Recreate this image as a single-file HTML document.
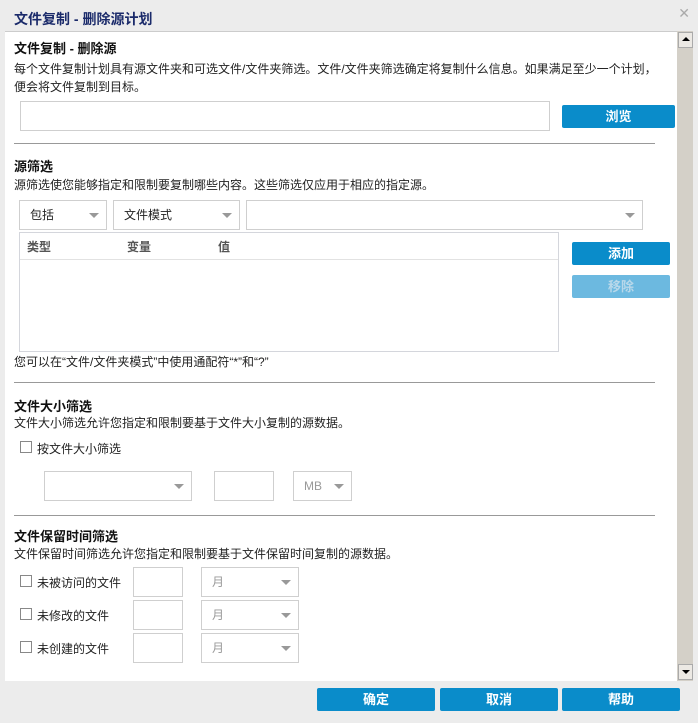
<!DOCTYPE html>
<html><head><meta charset="utf-8"><style>
*{box-sizing:border-box;margin:0;padding:0}
body{width:698px;height:723px;background:#ececec;font-family:"Liberation Sans","Noto Sans CJK SC",sans-serif;font-size:12px;color:#222;position:relative;overflow:hidden}
.a{position:absolute}
.title{left:14px;top:9px;font-size:14px;font-weight:bold;color:#1a2a6a}
.panel{left:5px;top:31px;width:672px;height:650px;background:#fff;border-top:1px solid #ccc}
.h{font-size:13px;font-weight:bold;color:#111}
.t{font-size:12px;color:#222}
.box{border:1px solid #cfcfcf;background:#fff}
.btn{background:#0a8cca;color:#fff;font-weight:bold;font-size:13px;text-align:center;border-radius:2px}
.sel{border:1px solid #cfcfcf;background:#fff;padding-left:10px;font-size:12px}
.arr{position:absolute;right:7px;top:50%;margin-top:-2px;width:0;height:0;border-left:5px solid transparent;border-right:5px solid transparent;border-top:5px solid #999}
.hr{height:1px;background:#999;left:14px;width:641px}
.cb{width:12px;height:12px;border:1px solid #888;background:#fff}
</style></head><body>
<div class="a title">文件复制 - 删除源计划</div>
<div class="a" style="right:8px;top:5px;color:#aaa;font-size:14px">✕</div>
<div class="a panel"></div>
<div class="a" style="left:677px;top:31px;width:16px;height:650px;background:#d4d0c8"></div>
<div class="a" style="left:678px;top:32px;width:15px;height:16px;background:#ece9e4;border:1px solid #aaa"><div style="margin:4px auto 0;width:0;height:0;border-left:4px solid transparent;border-right:4px solid transparent;border-bottom:4px solid #000"></div></div>
<div class="a" style="left:678px;top:664px;width:15px;height:16px;background:#ece9e4;border:1px solid #aaa"><div style="margin:5px auto 0;width:0;height:0;border-left:4px solid transparent;border-right:4px solid transparent;border-top:4px solid #000"></div></div>

<div class="a h" style="left:14px;top:38px">文件复制 - 删除源</div>
<div class="a t" style="left:14px;top:60px;line-height:18px;width:660px">每个文件复制计划具有源文件夹和可选文件/文件夹筛选。文件/文件夹筛选确定将复制什么信息。如果满足至少一个计划，<br>便会将文件复制到目标。</div>
<div class="a box" style="left:20px;top:101px;width:530px;height:30px"></div>
<div class="a btn" style="left:562px;top:105px;width:113px;height:23px;line-height:23px">浏览</div>
<div class="a hr" style="top:143px"></div>

<div class="a h" style="left:14px;top:156px">源筛选</div>
<div class="a t" style="left:14px;top:176px">源筛选使您能够指定和限制要复制哪些内容。这些筛选仅应用于相应的指定源。</div>
<div class="a sel" style="left:19px;top:200px;width:88px;height:30px;line-height:28px">包括<span class="arr"></span></div>
<div class="a sel" style="left:113px;top:200px;width:127px;height:30px;line-height:28px">文件模式<span class="arr"></span></div>
<div class="a sel" style="left:246px;top:200px;width:397px;height:30px"><span class="arr"></span></div>
<div class="a box" style="left:19px;top:232px;width:540px;height:120px;border-color:#d4d6dc"></div>
<div class="a" style="left:20px;top:259px;width:538px;height:1px;background:#e2e2e2"></div>
<div class="a" style="left:27px;top:238px;font-weight:bold;color:#555">类型</div>
<div class="a" style="left:127px;top:238px;font-weight:bold;color:#555">变量</div>
<div class="a" style="left:218px;top:238px;font-weight:bold;color:#555">值</div>
<div class="a btn" style="left:572px;top:242px;width:98px;height:23px;line-height:23px">添加</div>
<div class="a btn" style="left:572px;top:275px;width:98px;height:23px;line-height:23px;background:#6cb9e0;color:#b8d8ea">移除</div>
<div class="a t" style="left:14px;top:353px">您可以在“文件/文件夹模式”中使用通配符“*”和“?”</div>
<div class="a hr" style="top:382px"></div>

<div class="a h" style="left:14px;top:396px">文件大小筛选</div>
<div class="a t" style="left:14px;top:414px">文件大小筛选允许您指定和限制要基于文件大小复制的源数据。</div>
<div class="a cb" style="left:20px;top:441px"></div>
<div class="a t" style="left:37px;top:440px">按文件大小筛选</div>
<div class="a sel" style="left:44px;top:471px;width:148px;height:30px"><span class="arr"></span></div>
<div class="a box" style="left:214px;top:471px;width:60px;height:30px"></div>
<div class="a sel" style="left:293px;top:471px;width:59px;height:30px;line-height:28px;color:#999">MB<span class="arr"></span></div>
<div class="a hr" style="top:515px"></div>

<div class="a h" style="left:14px;top:526px">文件保留时间筛选</div>
<div class="a t" style="left:14px;top:545px">文件保留时间筛选允许您指定和限制要基于文件保留时间复制的源数据。</div>

<div class="a cb" style="left:20px;top:575px"></div>
<div class="a t" style="left:37px;top:574px">未被访问的文件</div>
<div class="a box" style="left:133px;top:567px;width:50px;height:30px"></div>
<div class="a sel" style="left:201px;top:567px;width:98px;height:30px;line-height:28px;color:#999">月<span class="arr"></span></div>

<div class="a cb" style="left:20px;top:608px"></div>
<div class="a t" style="left:37px;top:607px">未修改的文件</div>
<div class="a box" style="left:133px;top:600px;width:50px;height:30px"></div>
<div class="a sel" style="left:201px;top:600px;width:98px;height:30px;line-height:28px;color:#999">月<span class="arr"></span></div>

<div class="a cb" style="left:20px;top:641px"></div>
<div class="a t" style="left:37px;top:640px">未创建的文件</div>
<div class="a box" style="left:133px;top:633px;width:50px;height:30px"></div>
<div class="a sel" style="left:201px;top:633px;width:98px;height:30px;line-height:28px;color:#999">月<span class="arr"></span></div>

<div class="a btn" style="left:317px;top:688px;width:118px;height:23px;line-height:23px">确定</div>
<div class="a btn" style="left:440px;top:688px;width:118px;height:23px;line-height:23px">取消</div>
<div class="a btn" style="left:562px;top:688px;width:118px;height:23px;line-height:23px">帮助</div>
</body></html>
